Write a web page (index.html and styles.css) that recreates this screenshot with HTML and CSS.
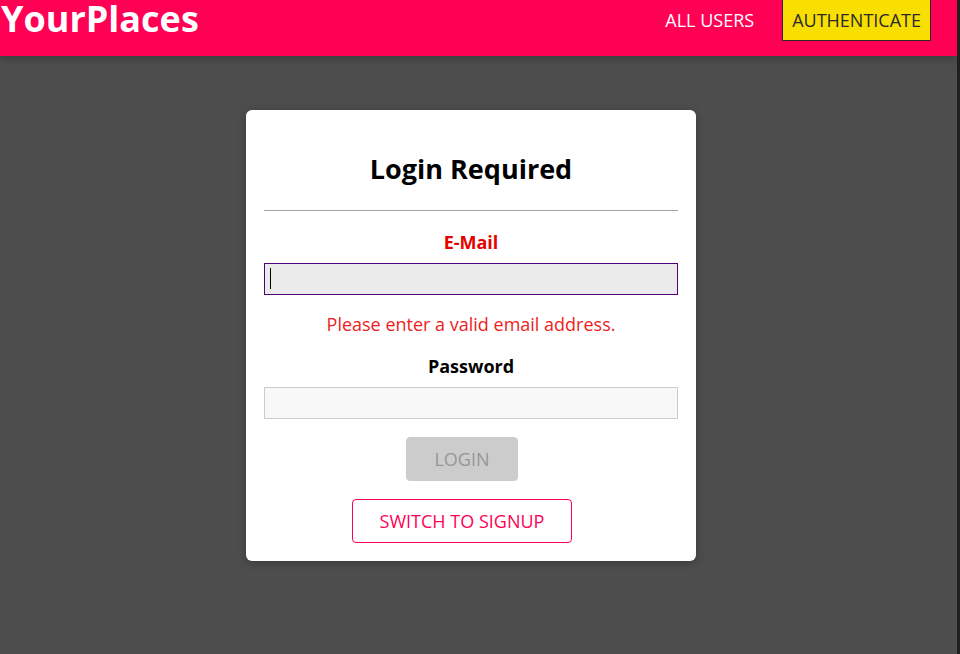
FILE: index.html
```html
<!DOCTYPE html>
<html lang="en">
<head>
<meta charset="utf-8">
<title>YourPlaces</title>
<link rel="stylesheet" href="styles.css">
</head>
<body>
<div class="page">
  <div class="app">
    <header class="main-header">
      <h1 class="brand">YourPlaces</h1>
      <nav class="nav">
        <a class="nav-link" href="#">ALL USERS</a>
        <a class="nav-link nav-link--active" href="#">AUTHENTICATE</a>
      </nav>
    </header>
    <main class="stage">
      <div class="card">
        <h2 class="card-title">Login Required</h2>
        <hr class="divider">
        <form class="form">
          <div class="form-control form-control--invalid">
            <label class="label" for="email">E-Mail</label>
            <div class="input input--focus" id="email"><span class="caret"></span></div>
            <p class="error">Please enter a valid email address.</p>
          </div>
          <div class="form-control">
            <label class="label" for="password">Password</label>
            <div class="input" id="password"></div>
          </div>
          <div class="actions">
            <button type="button" class="button button--disabled">LOGIN</button>
            <button type="button" class="button button--inverse">SWITCH TO SIGNUP</button>
          </div>
        </form>
      </div>
    </main>
  </div>
  <div class="scrollbar"></div>
</div>
</body>
</html>
```

FILE: styles.css
```css
* { box-sizing: border-box; }
html, body { margin: 0; padding: 0; height: 100%; }
body {
  font-family: "Open Sans", "Noto Sans", sans-serif;
  font-size: 16px;
  background: #4d4d4d;
  overflow: hidden;
}
.page { display: flex; height: 654px; }
.app { flex: 1; display: flex; flex-direction: column; }
.scrollbar { width: 3px; background: #1f1f1f; }

.main-header {
  height: 56px;
  background: #ff0055;
  display: flex;
  justify-content: space-between;
  align-items: flex-start;
  box-shadow: 0 2px 8px rgba(0,0,0,0.26);
  padding-right: 26px;
}
.brand {
  margin: 0;
  padding-left: 1px;
  color: #fff;
  font-size: 36px;
  font-weight: 700;
  line-height: 38px;
}
.nav { display: flex; align-items: flex-start; gap: 28px; }
.nav-link {
  color: #fff;
  text-decoration: none;
  font-size: 18px;
  line-height: 24px;
  padding: 8px 0 0;
}
.nav-link--active {
  background: #f8df00;
  color: #292929;
  border: 1px solid #292929;
  border-top: none;
  padding: 8px 9px;
  height: 41px;
}

.stage { flex: 1; padding-top: 54px; }
.card {
  width: 450px;
  margin-left: 246px;
  background: #fff;
  border-radius: 6px;
  padding: 40px 18px 18px;
  text-align: center;
  box-shadow: 0 2px 8px rgba(0,0,0,0.26);
}
.card-title {
  margin: 0;
  font-size: 27px;
  font-weight: 700;
  line-height: 38px;
  color: #000;
}
.divider {
  margin: 22px 0 0;
  border: none;
  border-top: 1px solid #a5a5a5;
}
.form { font-size: 18px; padding-top: 1px; }
.form-control { margin-top: 18px; }
.label {
  display: block;
  font-weight: 700;
  line-height: 24px;
  margin-bottom: 9px;
}
.input {
  display: block;
  width: 100%;
  height: 32px;
  border: 1px solid #ccc;
  background: #f8f8f8;
  padding: 4px 5px;
}
.input--focus {
  background: #ebebeb;
  border-color: #510077;
}
.caret {
  display: block;
  width: 1px;
  height: 21px;
  background: #000;
}
.form-control--invalid .label { color: #e60000; }
.error {
  margin: 17px 0 0;
  line-height: 24px;
  color: #ee1c1c;
}
.actions {
  margin-top: 18px;
  display: flex;
  flex-direction: column;
  align-items: center;
  gap: 18px;
  padding-right: 18px;
}
.button {
  font: inherit;
  font-size: 18px;
  line-height: 24px;
  padding: 9px 27px;
  border-radius: 4px;
  cursor: pointer;
}
.button--disabled {
  background: #ccc;
  color: #979797;
  border: 1px solid #ccc;
}
.button--inverse {
  background: #fff;
  color: #ff0055;
  border: 1px solid #ff0055;
}
```
